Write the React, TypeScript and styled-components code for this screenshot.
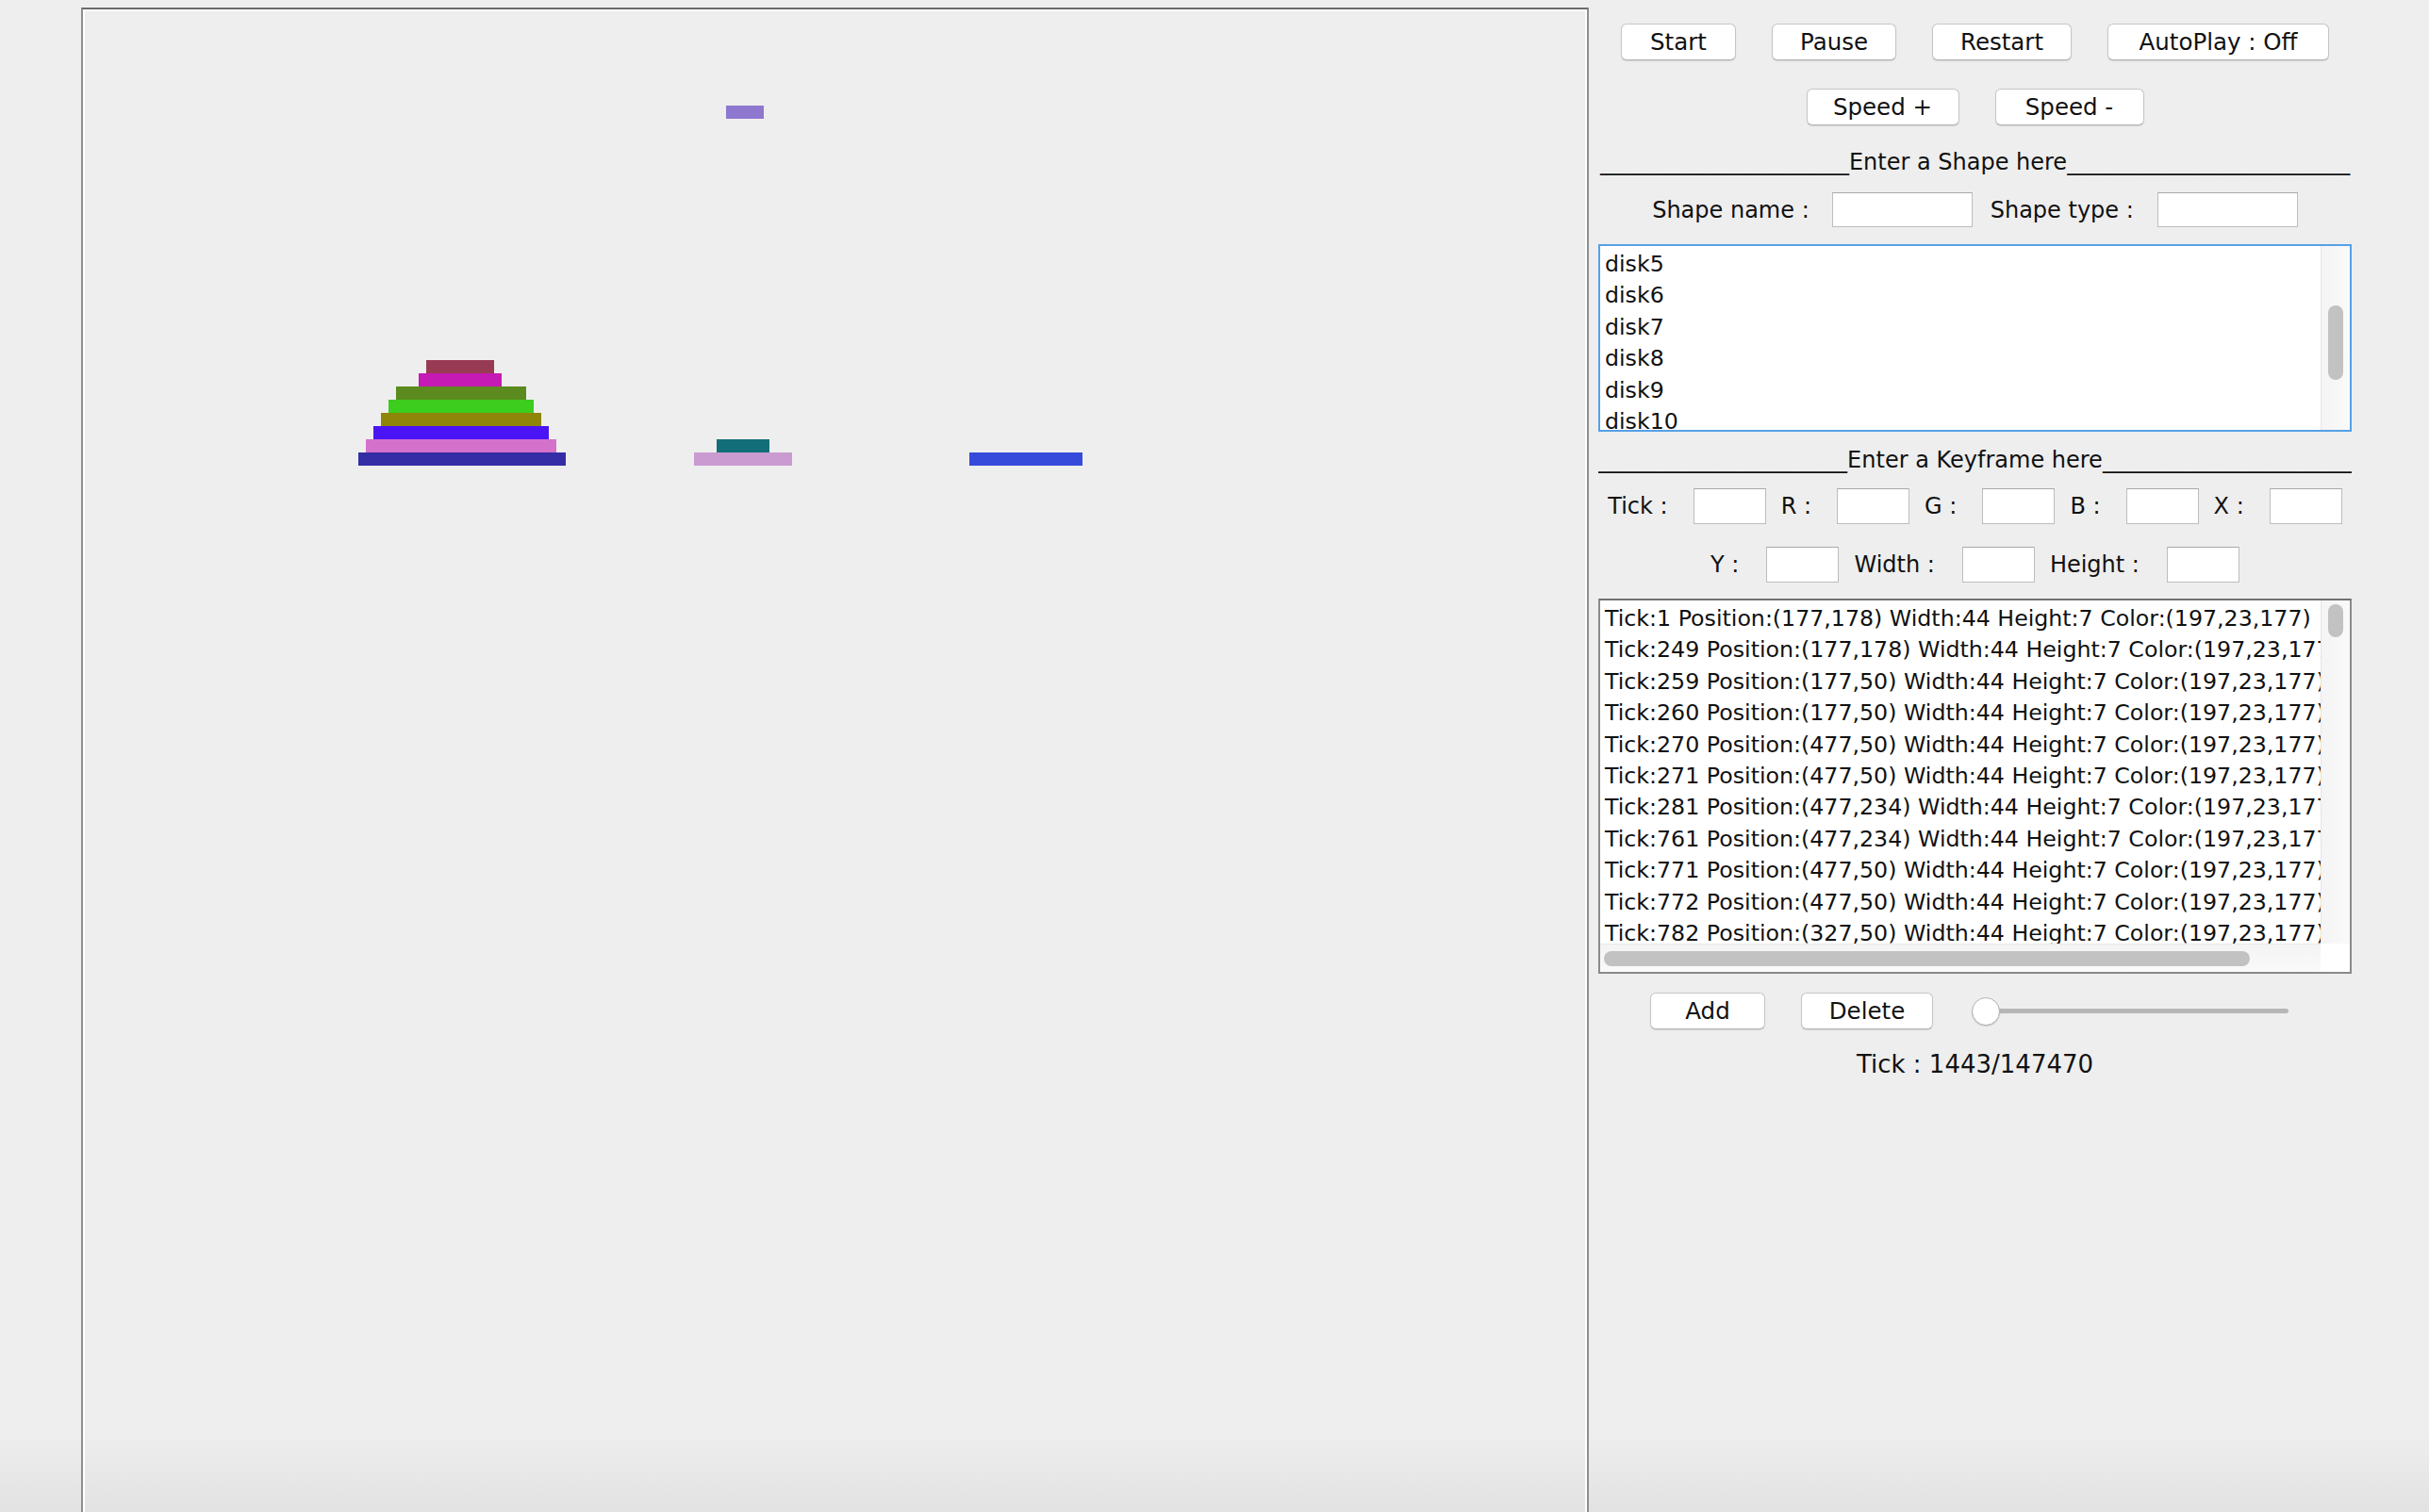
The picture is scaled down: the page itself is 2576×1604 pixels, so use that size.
import React from "react";
import styled, { createGlobalStyle } from "styled-components";

//#region STYLES
const GlobalStyle = createGlobalStyle`
html, body {
    margin: 0;
    padding: 0;
}
body {
    width: 2576px;
    height: 1604px;
    overflow: hidden;
    background: linear-gradient(to bottom, #eeeeee 0, #eeeeee 1520px, #e2e2e2 1604px);
    font-family: "DejaVu Sans", "Liberation Sans", sans-serif;
    color: #111;
}
`

const Page = styled.div`
display: flex;
align-items: flex-start;
height: 1604px;
padding-left: 86px;
box-sizing: border-box;
overflow: hidden;
`

const Canvas = styled.div`
position: relative;
flex: none;
width: 1599px;
height: 1640px;
margin-top: 8px;
box-sizing: border-box;
border: 2px solid #8e8e8e;
border-top-color: #6b6b6b;
box-shadow: inset 2px 2px 0 #ffffff, inset -2px 0 0 #ffffff;
`

const Shape = styled.div`
position: absolute;
height: 14px;
`

const Side = styled.div`
flex: none;
width: 819px;
display: flex;
flex-direction: column;
align-items: center;
padding-top: 25px;
`

const ButtonRow = styled.div<{ $top: number }>`
display: flex;
justify-content: center;
gap: 38px;
margin-top: ${p => p.$top}px;
`

const Button = styled.button<{ $w: number }>`
width: ${p => p.$w}px;
height: 39px;
padding: 0;
background: #ffffff;
border: 1px solid #c6c6c6;
border-bottom-color: #b4b4b4;
border-radius: 6px;
box-shadow: 0 1px 1px rgba(0, 0, 0, 0.12);
font-family: inherit;
font-size: 24.5px;
color: #111;
`

const Header = styled.div<{ $top: number }>`
width: 799px;
height: 30px;
line-height: 30px;
margin-top: ${p => p.$top}px;
font-size: 24px;
text-align: center;
white-space: nowrap;
overflow: hidden;
`

const FieldRow = styled.div<{ $top: number; $gap: number }>`
display: flex;
align-items: center;
justify-content: center;
gap: ${p => p.$gap}px;
margin-top: ${p => p.$top}px;
`

const Label = styled.span<{ $space: number }>`
font-size: 24px;
white-space: nowrap;
margin-right: ${p => p.$space}px;
`

const Input = styled.div<{ $w: number; $h: number }>`
width: ${p => p.$w}px;
height: ${p => p.$h}px;
box-sizing: border-box;
background: #ffffff;
border: 1px solid #bdbdbd;
border-top-color: #a9a9a9;
`

const ShapeBox = styled.div`
display: flex;
width: 799px;
height: 199px;
margin-top: 18px;
box-sizing: border-box;
border: 2px solid #56a0e6;
background: #ffffff;
`

const ListBody = styled.div`
flex: 1;
overflow: hidden;
padding: 3px 0 0 5px;
font-size: 23.7px;
line-height: 33.4px;
white-space: nowrap;
`

const VTrack = styled.div`
flex: none;
width: 31px;
box-sizing: border-box;
border-left: 1px solid #e6e6e6;
background: linear-gradient(to right, #f4f4f4, #fafafa);
display: flex;
justify-content: center;
`

const Thumb = styled.div<{ $top: number; $h: number }>`
width: 16px;
height: ${p => p.$h}px;
margin-top: ${p => p.$top}px;
border-radius: 8px;
background: #c2c2c2;
`

const KeyBox = styled.div`
display: grid;
grid-template-columns: 1fr 31px;
grid-template-rows: 364px 30px;
width: 799px;
height: 398px;
margin-top: 17px;
box-sizing: border-box;
border: 2px solid #8a8a8a;
border-top-color: #707070;
background: #ffffff;
`

const HTrack = styled.div`
box-sizing: border-box;
border-top: 1px solid #e8e8e8;
background: linear-gradient(to bottom, #f4f4f4, #fafafa);
padding: 7px 0 0 4px;
`

const HThumb = styled.div`
width: 685px;
height: 16px;
border-radius: 8px;
background: #c2c2c2;
`

const Corner = styled.div`
background: #ffffff;
`

const BottomRow = styled.div`
display: flex;
align-items: center;
gap: 38px;
margin-top: 20px;
padding-right: 12px;
`

const Slider = styled.div`
position: relative;
width: 336px;
height: 30px;
margin-left: 3px;
display: flex;
align-items: center;
padding-left: 15px;
box-sizing: border-box;
`

const SliderRail = styled.div`
flex: 1;
height: 5px;
border-radius: 3px;
background: #b6b6b6;
`

const SliderKnob = styled.div`
position: absolute;
left: 0;
top: 0;
width: 30px;
height: 30px;
box-sizing: border-box;
border-radius: 50%;
background: #ffffff;
border: 1px solid #b3b3b3;
box-shadow: 0 1px 1px rgba(0, 0, 0, 0.15);
`

const TickLabel = styled.div`
margin-top: 22px;
height: 30px;
line-height: 30px;
font-size: 26px;
`
//#endregion

const shapes = [
    { x: 682, y: 102, w: 40, color: '#8e77cf' },
    { x: 364, y: 372, w: 72, color: '#983a53' },
    { x: 356, y: 386, w: 88, color: '#c51ab3' },
    { x: 332, y: 400, w: 138, color: '#5b8a1e' },
    { x: 324, y: 414, w: 154, color: '#3ccd1e' },
    { x: 316, y: 428, w: 170, color: '#8e8509' },
    { x: 308, y: 442, w: 186, color: '#4b14f5' },
    { x: 300, y: 456, w: 202, color: '#d471cb' },
    { x: 292, y: 470, w: 220, color: '#342da6' },
    { x: 672, y: 456, w: 56, color: '#126e78' },
    { x: 648, y: 470, w: 104, color: '#c99bd1' },
    { x: 940, y: 470, w: 120, color: '#354adb' },
]

const disks = ['disk5', 'disk6', 'disk7', 'disk8', 'disk9', 'disk10']

const frames: [number, string][] = [
    [1, '177,178'],
    [249, '177,178'],
    [259, '177,50'],
    [260, '177,50'],
    [270, '477,50'],
    [271, '477,50'],
    [281, '477,234'],
    [761, '477,234'],
    [771, '477,50'],
    [772, '477,50'],
    [782, '327,50'],
]

const under = (n: number) => '_'.repeat(n)

export default function App() {
    return (
        <>
            <GlobalStyle/>
            <Page>
                <Canvas>
                    {shapes.map((s, i) => (
                        <Shape key={i} style={{ left: s.x, top: s.y, width: s.w, background: s.color }}/>
                    ))}
                </Canvas>

                <Side>
                    <ButtonRow $top={0}>
                        <Button $w={122}>Start</Button>
                        <Button $w={132}>Pause</Button>
                        <Button $w={148}>Restart</Button>
                        <Button $w={235}>AutoPlay : Off</Button>
                    </ButtonRow>
                    <ButtonRow $top={30}>
                        <Button $w={162}>Speed +</Button>
                        <Button $w={158}>Speed -</Button>
                    </ButtonRow>

                    <Header $top={24}>{under(22)}Enter a Shape here{under(25)}</Header>
                    <FieldRow $top={17} $gap={19}>
                        <Label $space={5}>Shape name :</Label>
                        <Input $w={149} $h={37}/>
                        <Label $space={6}>Shape type :</Label>
                        <Input $w={149} $h={37}/>
                    </FieldRow>

                    <ShapeBox>
                        <ListBody>
                            {disks.map(d => <div key={d}>{d}</div>)}
                        </ListBody>
                        <VTrack>
                            <Thumb $top={63} $h={79}/>
                        </VTrack>
                    </ShapeBox>

                    <Header $top={15}>{under(22)}Enter a Keyframe here{under(22)}</Header>
                    <FieldRow $top={15} $gap={16}>
                        <Label $space={11}>Tick :</Label>
                        <Input $w={77} $h={38}/>
                        <Label $space={11}>R :</Label>
                        <Input $w={77} $h={38}/>
                        <Label $space={11}>G :</Label>
                        <Input $w={77} $h={38}/>
                        <Label $space={11}>B :</Label>
                        <Input $w={77} $h={38}/>
                        <Label $space={11}>X :</Label>
                        <Input $w={77} $h={38}/>
                    </FieldRow>
                    <FieldRow $top={24} $gap={16}>
                        <Label $space={13}>Y :</Label>
                        <Input $w={77} $h={38}/>
                        <Label $space={13}>Width :</Label>
                        <Input $w={77} $h={38}/>
                        <Label $space={13}>Height :</Label>
                        <Input $w={77} $h={38}/>
                    </FieldRow>

                    <KeyBox>
                        <ListBody>
                            {frames.map(([tick, pos]) => (
                                <div key={tick}>Tick:{tick} Position:({pos}) Width:44 Height:7 Color:(197,23,177)</div>
                            ))}
                        </ListBody>
                        <VTrack>
                            <Thumb $top={4} $h={35}/>
                        </VTrack>
                        <HTrack>
                            <HThumb/>
                        </HTrack>
                        <Corner/>
                    </KeyBox>

                    <BottomRow>
                        <Button $w={122}>Add</Button>
                        <Button $w={140}>Delete</Button>
                        <Slider>
                            <SliderRail/>
                            <SliderKnob/>
                        </Slider>
                    </BottomRow>

                    <TickLabel>Tick : 1443/147470</TickLabel>
                </Side>
            </Page>
        </>
    )
}
